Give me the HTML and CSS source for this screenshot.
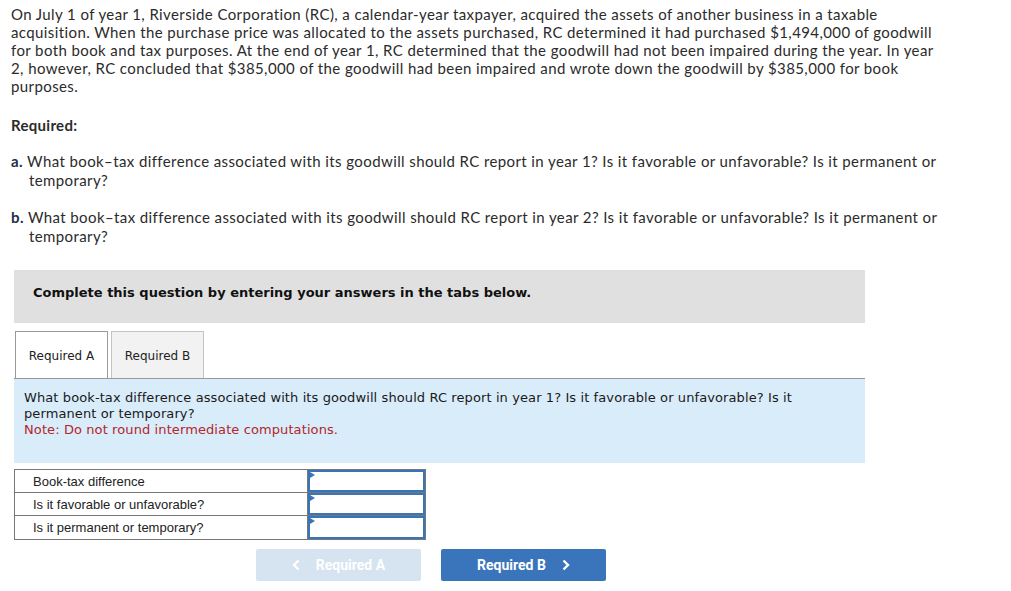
FILE: index.html
```html
<!DOCTYPE html>
<html>
<head>
<meta charset="utf-8">
<link rel="stylesheet" href="styles.css">
</head>
<body>
<div class="page">
  <p class="intro">On July 1 of year 1, Riverside Corporation (RC), a calendar-year taxpayer, acquired the assets of another business in a taxable<br>acquisition. When the purchase price was allocated to the assets purchased, RC determined it had purchased $1,494,000 of goodwill<br>for both book and tax purposes. At the end of year 1, RC determined that the goodwill had not been impaired during the year. In year<br>2, however, RC concluded that $385,000 of the goodwill had been impaired and wrote down the goodwill by $385,000 for book<br>purposes.</p>
  <p class="req-title">Required:</p>
  <div class="req-item"><b>a.</b> What book–tax difference associated with its goodwill should RC report in year 1? Is it favorable or unfavorable? Is it permanent or<br>temporary?</div>
  <div class="req-item"><b>b.</b> What book–tax difference associated with its goodwill should RC report in year 2? Is it favorable or unfavorable? Is it permanent or<br>temporary?</div>

  <div class="instr">Complete this question by entering your answers in the tabs below.</div>

  <div class="tabs">
    <div class="tab active">Required A</div>
    <div class="tab">Required B</div>
  </div>
  <div class="panel">
    <div class="q">What book-tax difference associated with its goodwill should RC report in year 1? Is it favorable or unfavorable? Is it<br>permanent or temporary?</div>
    <div class="note">Note: Do not round intermediate computations.</div>
  </div>

  <div class="answers">
    <div class="row">
      <div class="label">Book-tax difference</div>
      <div class="cell"><span class="flag"></span></div>
    </div>
    <div class="row">
      <div class="label">Is it favorable or unfavorable?</div>
      <div class="cell"><span class="flag"></span></div>
    </div>
    <div class="row">
      <div class="label">Is it permanent or temporary?</div>
      <div class="cell"><span class="flag"></span></div>
    </div>
  </div>

  <div class="nav">
    <div class="btn disabled"><svg class="chev left" width="8" height="12" viewBox="0 0 8 12"><path d="M6.5 1.5 L2 6 L6.5 10.5" fill="none" stroke="#fff" stroke-width="2.4"/></svg>Required A</div>
    <div class="btn primary">Required B<svg class="chev right" width="8" height="12" viewBox="0 0 8 12"><path d="M1.5 1.5 L6 6 L1.5 10.5" fill="none" stroke="#fff" stroke-width="2.4"/></svg></div>
  </div>
</div>
</body>
</html>
```

FILE: styles.css
```css
* { box-sizing: border-box; }
html, body { margin: 0; padding: 0; background: #fff; }
.page {
  padding: 5px 0 0 0;
  width: 1011px;
}
.intro {
  margin: 0 0 0 11px;
  font-family: Lato, "Open Sans", sans-serif;
  font-size: 15px;
  line-height: 18px;
  letter-spacing: 0.4px;
  color: #2b2b2b;
  white-space: nowrap;
}
.req-title {
  margin: 21px 0 0 11px;
  font-family: Lato, sans-serif;
  font-weight: bold;
  font-size: 15px;
  line-height: 18px;
  letter-spacing: 0.3px;
  color: #2b2b2b;
}
.req-item {
  margin: 18px 0 0 11px;
  padding-left: 18px;
  text-indent: -18px;
  font-family: Lato, sans-serif;
  font-size: 15px;
  line-height: 19px;
  letter-spacing: 0.4px;
  color: #2b2b2b;
  white-space: nowrap;
}
.req-item b { color: #1f2d4a; }
.instr {
  margin: 24px 0 0 14px;
  width: 851px;
  height: 53px;
  background: #e0e0e0;
  padding: 14px 0 0 19px;
  font-family: Verdana, "DejaVu Sans", sans-serif;
  font-weight: bold;
  font-size: 13px;
  line-height: 17px;
  color: #111;
}
.tabs {
  display: flex;
  gap: 3px;
  margin: 8px 0 0 15px;
  height: 47px;
}
.tab {
  width: 93px;
  height: 47px;
  border: 1px solid #c4c4c4;
  border-bottom: none;
  background: #f2f2f2;
  padding-top: 2px;
  font-family: Verdana, "DejaVu Sans", sans-serif;
  font-size: 12px;
  color: #222;
  display: flex;
  align-items: center;
  justify-content: center;
}
.tab.active {
  background: #fff;
  border-color: #999;
}
.panel {
  margin-left: 14px;
  width: 851px;
  height: 85px;
  border-top: 1px solid #999;
  background: #d9ecfa;
  padding: 11px 0 0 10px;
  font-family: Verdana, "DejaVu Sans", sans-serif;
  font-size: 13px;
  line-height: 16px;
  letter-spacing: 0.1px;
  color: #1a1a1a;
}
.note { color: #b3262b; }
.answers {
  margin: 6px 0 0 14px;
  width: 412px;
  border: 1px solid #777;
  border-bottom: none;
}
.row {
  display: flex;
  height: 23px;
  border-bottom: 1px solid #777;
}
.row:last-child { height: 24px; }
.label {
  width: 293px;
  border-right: 1px solid #777;
  padding: 1px 0 0 18px;
  font-family: Arial, "Liberation Sans", sans-serif;
  font-size: 13px;
  line-height: 22px;
  color: #222;
}
.cell {
  flex: 1;
  border: 2px solid #3a74b8;
  position: relative;
  background: #fff;
}
.flag {
  position: absolute;
  left: 0;
  top: 0;
  width: 0;
  height: 0;
  border-top: 3px solid transparent;
  border-bottom: 3px solid transparent;
  border-left: 5px solid #3a74b8;
}
.nav {
  display: flex;
  gap: 20px;
  margin: 9px 0 0 256px;
}
.btn {
  width: 165px;
  height: 32px;
  border-radius: 2px;
  display: flex;
  align-items: center;
  justify-content: center;
  font-family: Roboto, sans-serif;
  font-weight: bold;
  font-size: 14px;
  color: #fff;
}
.btn.disabled { background: #d6e3f1; }
.btn.primary { background: #3a75bb; }
.chev.left { margin-right: 16px; }
.chev.right { margin-left: 16px; }
```
